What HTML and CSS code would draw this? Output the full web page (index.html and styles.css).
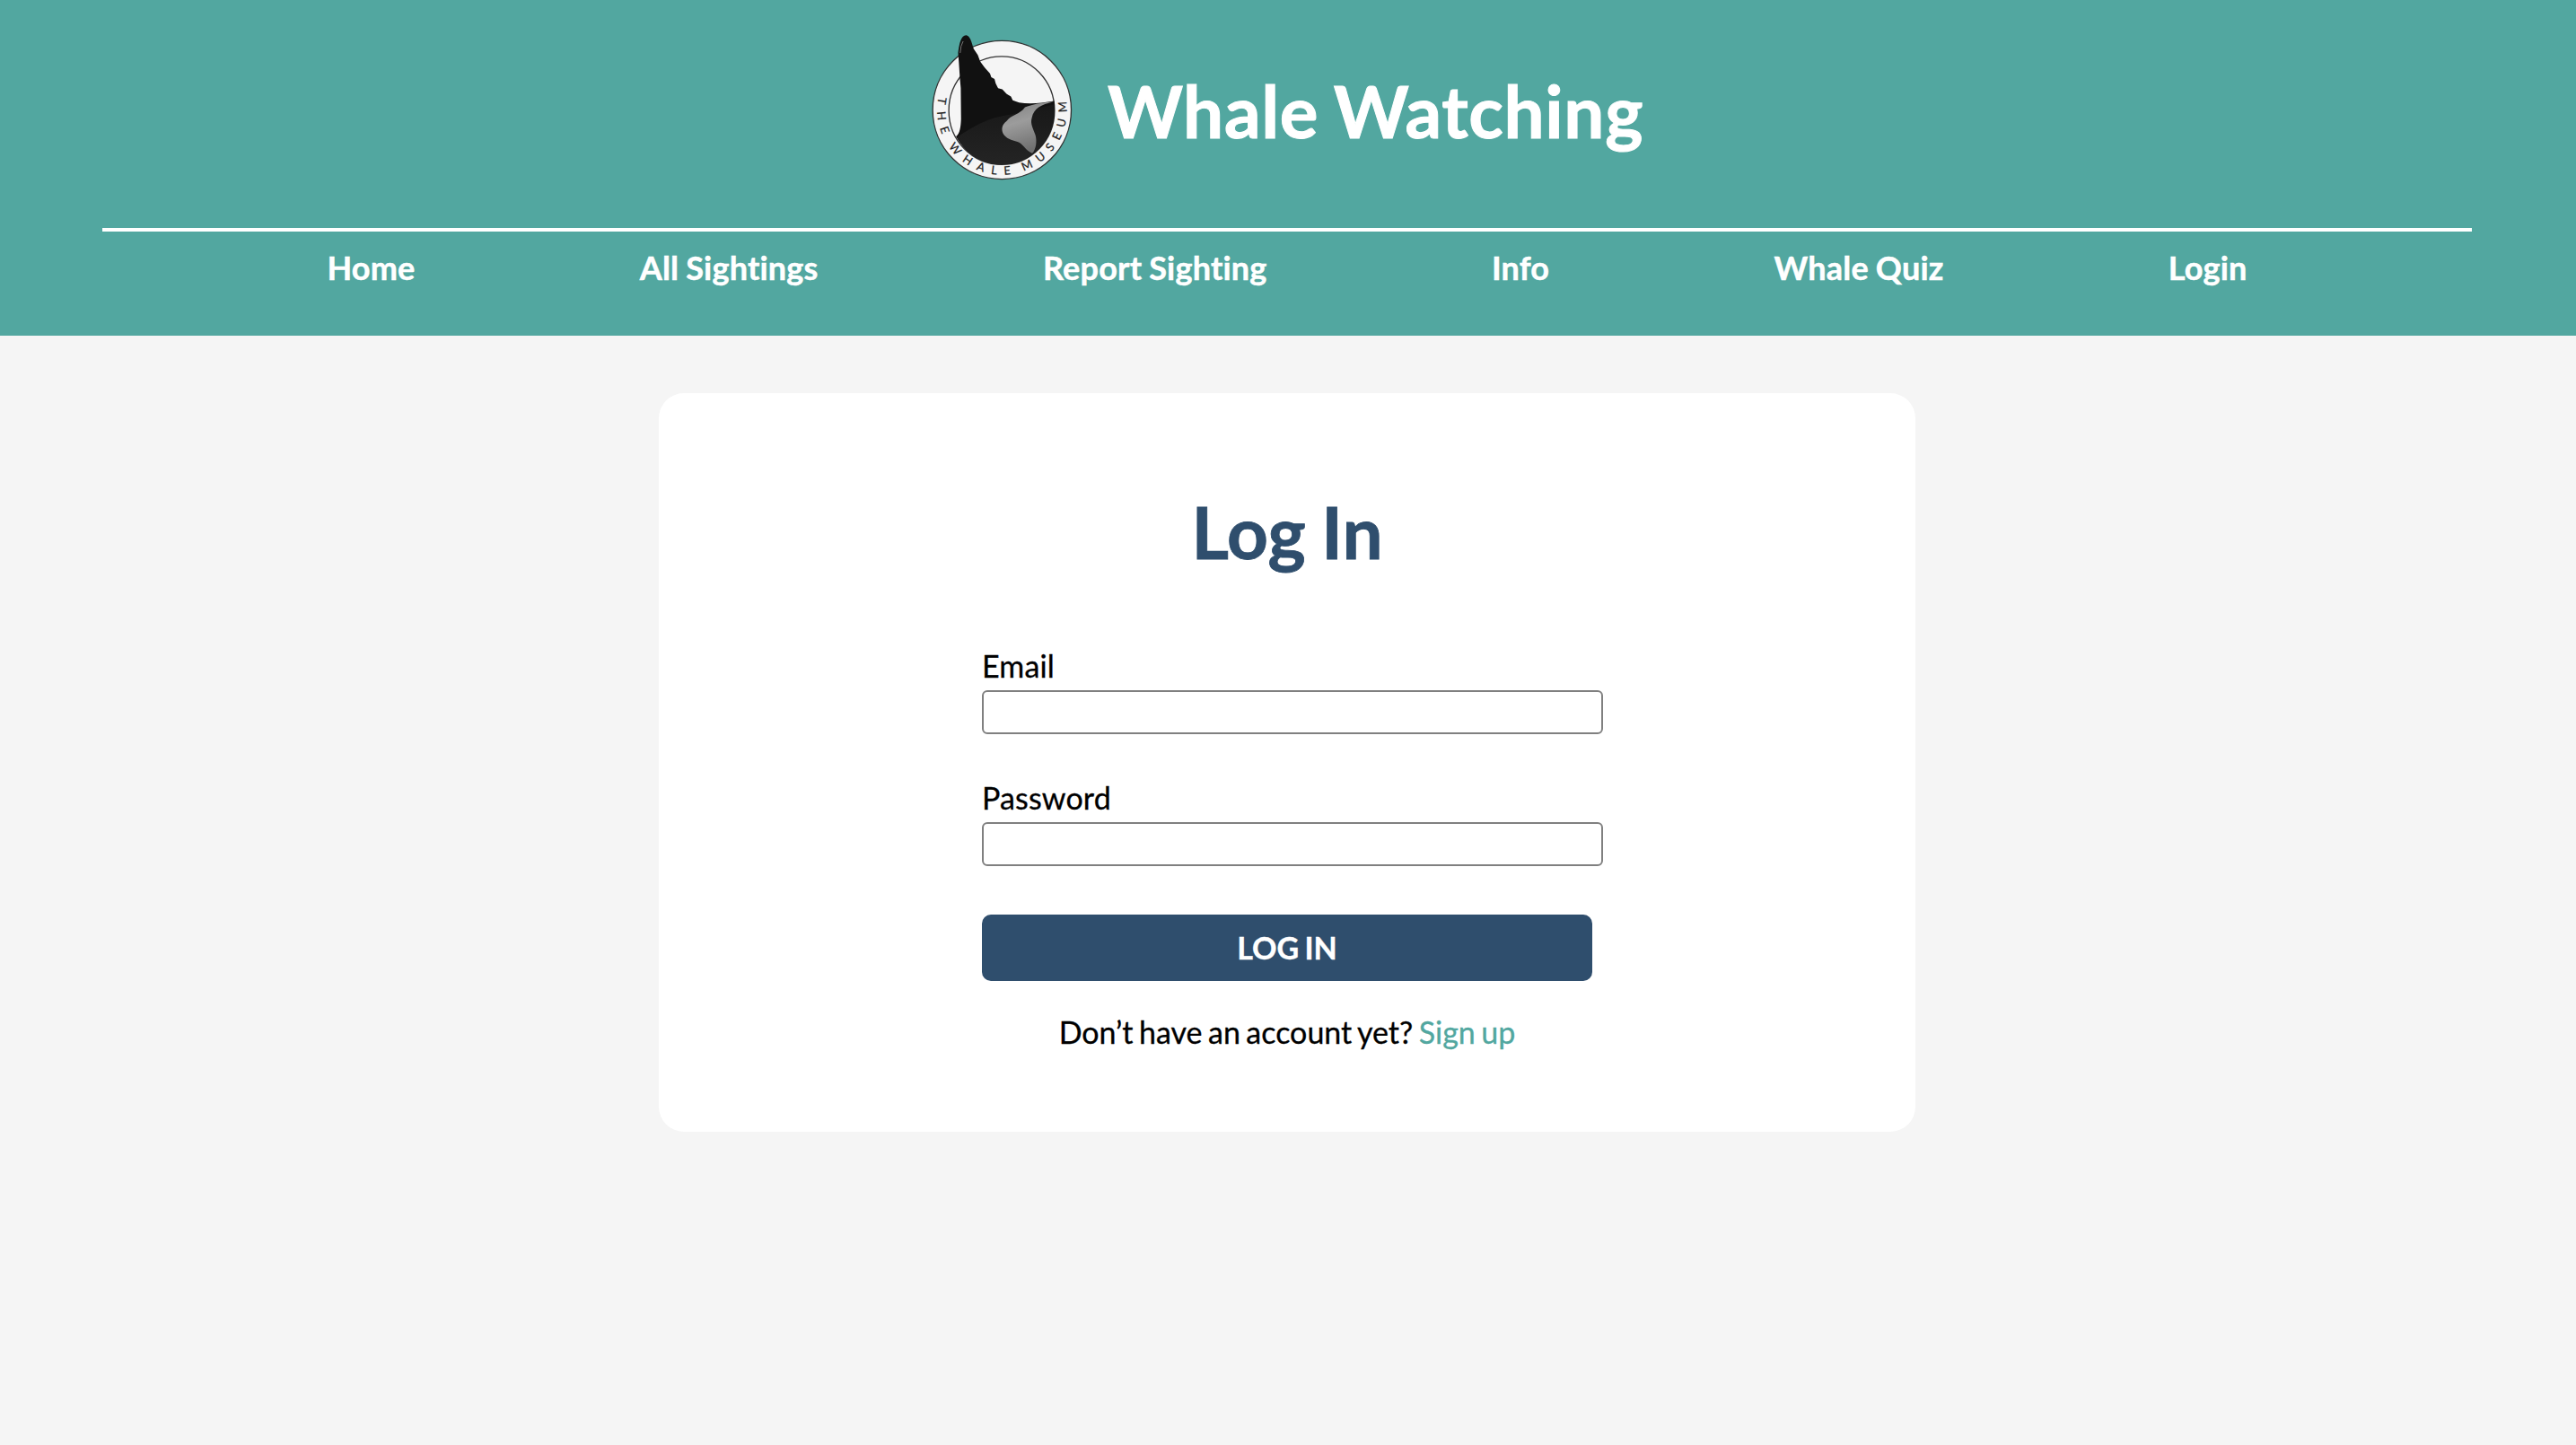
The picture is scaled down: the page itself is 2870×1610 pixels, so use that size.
FILE: index.html
```html
<!DOCTYPE html>
<html lang="en">
<head>
<meta charset="utf-8">
<title>Whale Watching</title>
<link rel="stylesheet" href="styles.css">
</head>
<body>
<header class="header">
  <div class="brand">
    <svg class="logo" viewBox="50 55 477 490" role="img" aria-label="The Whale Museum">
      <defs>
        <path id="ring" d="M84.1 234.8A217 217 0 1 0 491.9 234.8"/>
        <linearGradient id="patch" x1="0" y1="0" x2="0.3" y2="1">
          <stop offset="0" stop-color="#808080"/><stop offset=".45" stop-color="#9c9c9c"/><stop offset="1" stop-color="#707070"/>
        </linearGradient>
        <linearGradient id="flank" x1="0" y1="0" x2="0" y2="1">
          <stop offset="0" stop-color="#181818"/><stop offset="1" stop-color="#242424"/>
        </linearGradient>
      </defs>
      <circle cx="288" cy="309" r="232" fill="#f5f5f5" stroke="#333" stroke-width="4"/>
      <ellipse cx="287" cy="311" rx="177" ry="181" fill="#f5f5f5" stroke="#333" stroke-width="4"/>
      <path fill="#111" d="M141 118C145 88 150 60 168 59C181 60 186 82 193 104L207 125L215 147L230 167L248 187L252 199L263 205L267 220L275 236L289 240L304 256L318 264L324 277L345 284C380 291 420 286 463 279L464 311A177 181 0 0 1 287 492C225 492 168 460 134 398C147 390 150 365 151 340L150 235C146 195 145 160 141 118Z"/>
      <path fill="url(#flank)" d="M143 396C195 365 235 335 320 324L462 290L464 311A177 181 0 0 1 287 492C225 492 174 462 138 402Z"/>
      <path fill="url(#patch)" d="M460 282C425 284 385 291 365 300C349 324 316 327 304 346C286 360 286 375 292 389C301 405 320 410 340 416C360 423 366 445 389 454C402 443 406 414 400 393C392 370 382 355 388 335C395 304 418 291 460 282Z"/>
      <path fill="none" stroke="#aaa" stroke-width="2" d="M148 118Q149 93 158 79"/>
      <g class="logo-text">
        <text textLength="128"><textPath href="#ring" startOffset="96">THE</textPath></text>
        <text textLength="240"><textPath href="#ring" startOffset="326">WHALE</textPath></text>
        <text textLength="296"><textPath href="#ring" startOffset="638">MUSEUM</textPath></text>
      </g>
    </svg>
    <h1 class="title">Whale Watching</h1>
  </div>
  <nav class="nav">
    <a href="#">Home</a>
    <a href="#">All Sightings</a>
    <a href="#">Report Sighting</a>
    <a href="#">Info</a>
    <a href="#">Whale Quiz</a>
    <a href="#">Login</a>
  </nav>
</header>
<main class="card">
  <h2 class="heading">Log In</h2>
  <form class="form">
    <label class="label" for="email">Email</label>
    <input class="input" id="email" type="email">
    <label class="label" for="password">Password</label>
    <input class="input" id="password" type="password">
    <button class="button" type="button">LOG IN</button>
    <p class="signup">Don’t have an account yet? <a href="#">Sign up</a></p>
  </form>
</main>
</body>
</html>
```
FILE: styles.css
```css
body {
  margin: 0;
  background: #f5f5f5;
  color: #000;
  font-family: Lato, sans-serif;
  font-size: 34px;
  font-variant-ligatures: none;
}

a {
  text-decoration: none;
}

.header {
  box-sizing: border-box;
  height: 374px;
  padding: 38px 116px 0 114px;
  background: #52a7a0;
  color: #fff;
}

.brand {
  display: flex;
  justify-content: center;
  height: 216px;
  gap: 38px;
}

.logo {
  width: 159px;
  height: 163px;
}

.logo-text {
  font-size: 39px;
  text-anchor: middle;
  fill: #222;
  stroke: #222;
  stroke-width: 0.6px;
}

.title {
  margin: 37px 0 0;
  font-size: 80px;
  font-weight: 700;
  letter-spacing: 0.67px;
  word-spacing: -3px;
  line-height: 96px;
  -webkit-text-stroke: 1px #fff;
}

.nav {
  display: flex;
  justify-content: space-evenly;
  border-top: 4px solid #fff;
  padding-top: 18px;
}

.nav a {
  color: #fff;
  font-size: 36px;
  font-weight: 700;
  letter-spacing: 0.2px;
  word-spacing: -1px;
  line-height: 44px;
  -webkit-text-stroke: 0.5px #fff;
}

.card {
  box-sizing: border-box;
  width: 1400px;
  height: 823px;
  margin: 64px 0 0 734px;
  padding-top: 106px;
  border-radius: 28px;
  background: #fff;
}

.heading {
  margin: 0;
  color: #2f4e6d;
  font-size: 80px;
  font-weight: 700;
  line-height: 96px;
  text-align: center;
  word-spacing: -2px;
  -webkit-text-stroke: 0.8px #2f4e6d;
}

.form {
  display: flex;
  flex-direction: column;
  width: 680px;
  margin: 82px auto 0;
}

.label {
  height: 40px;
  letter-spacing: 0.15px;
  line-height: 40px;
  -webkit-text-stroke: 0.3px;
}

.input {
  box-sizing: border-box;
  width: 692px;
  height: 49px;
  margin: 7px 0 51px;
  padding: 2px 4px;
  border: 2px solid #808080;
  border-radius: 6px;
  font: inherit;
}

.button {
  height: 74px;
  margin-top: 3px;
  padding: 0;
  border: 0;
  border-radius: 10px;
  background: #2f4e6d;
  color: #fff;
  font: 700 34px/74px Lato, sans-serif;
  word-spacing: -2px;
  -webkit-text-stroke: 0.4px #fff;
}

.signup {
  margin: 37px 0 0;
  line-height: 40px;
  text-align: center;
  word-spacing: -2.2px;
  -webkit-text-stroke: 0.3px;
}

.signup a {
  color: #52a7a0;
}
```
